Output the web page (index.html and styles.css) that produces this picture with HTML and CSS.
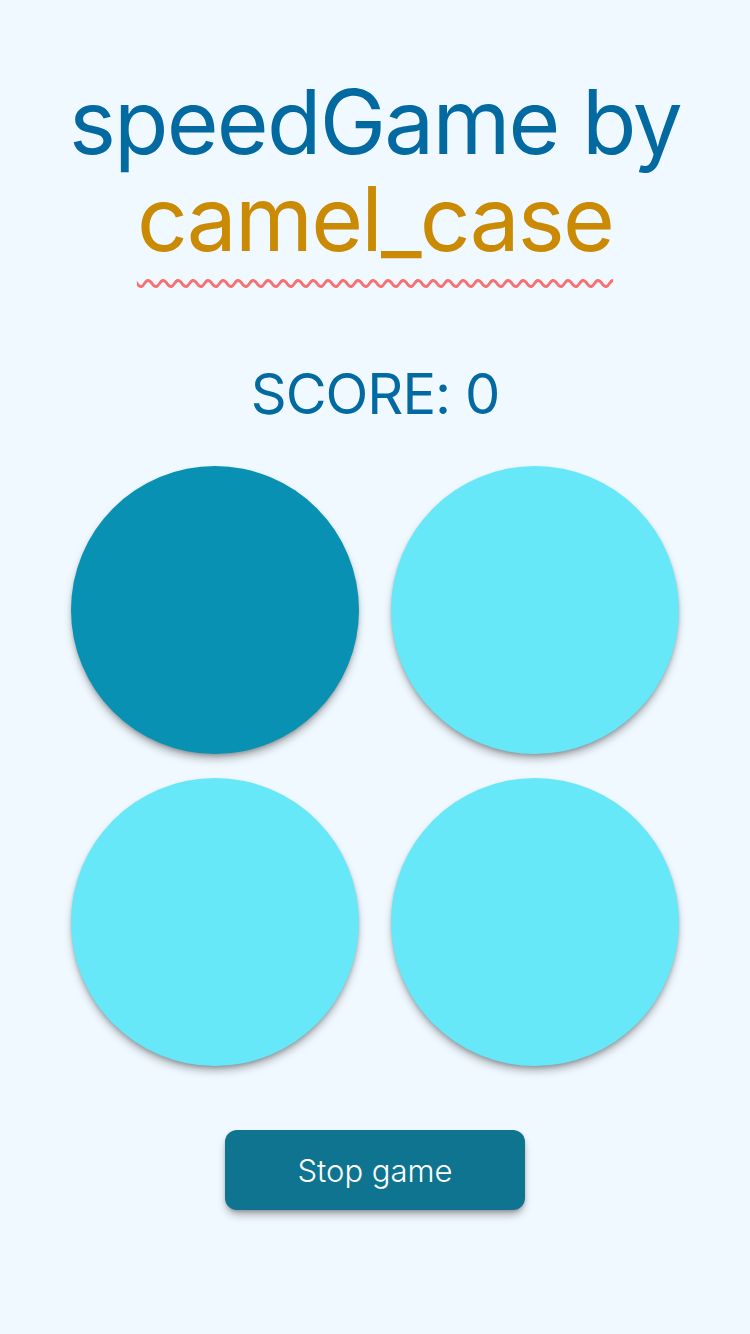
FILE: index.html
```html
<!DOCTYPE html>
<html lang="en">
<head>
<meta charset="utf-8">
<link rel="stylesheet" href="styles.css">
</head>
<body>
<main class="app">
  <h1 class="title">speedGame by<br><span class="author">camel_case</span></h1>
  <p class="score">SCORE: 0</p>
  <div class="board">
    <div class="circle active"></div>
    <div class="circle"></div>
    <div class="circle"></div>
    <div class="circle"></div>
  </div>
  <button class="stop">Stop game</button>
</main>
</body>
</html>
```
FILE: styles.css
```css
html, body {
  margin: 0;
  padding: 0;
  background: #f0f9ff;
}
body {
  width: 750px;
  height: 1334px;
  font-family: Inter, "Noto Sans", sans-serif;
}
.app {
  display: flex;
  flex-direction: column;
  align-items: center;
}
.title {
  margin: 73px 0 0;
  font-weight: 400;
  font-size: 89px;
  line-height: 97px;
  letter-spacing: -1.8px;
  color: #0369a1;
  text-align: center;
}
.author {
  color: #ca8a04;
  text-decoration: underline wavy #f87171;
  text-decoration-thickness: 3px;
  text-underline-offset: 28px;
}
.score {
  margin: 95px 0 0;
  font-size: 56px;
  line-height: 64px;
  color: #0369a1;
  letter-spacing: -1px;
}
.board {
  margin-top: 40px;
  display: grid;
  grid-template-columns: 288px 288px;
  column-gap: 32px;
  row-gap: 24px;
}
.circle {
  width: 288px;
  height: 288px;
  border-radius: 50%;
  background: #67e8f9;
  box-shadow: 0 6px 10px -2px rgba(0,0,0,0.35), 0 2px 4px -1px rgba(0,0,0,0.2);
}
.circle.active {
  background: #0891b2;
}
.stop {
  margin-top: 64px;
  width: 300px;
  height: 80px;
  border: none;
  border-radius: 12px;
  background: #0e7490;
  color: #fff;
  font-family: Inter, "Noto Sans", sans-serif;
  font-size: 31px;
  font-weight: 300;
  box-shadow: 0 6px 10px -2px rgba(0,0,0,0.35), 0 2px 4px -1px rgba(0,0,0,0.2);
}
```
